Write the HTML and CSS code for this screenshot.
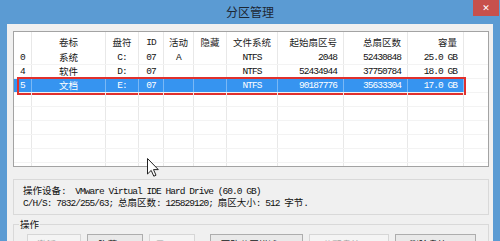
FILE: index.html
```html
<!DOCTYPE html>
<html lang="zh-CN">
<head>
    <meta charset="UTF-8">
    <title>分区管理</title>
    <link rel="stylesheet" href="styles.css">
</head>
<body>
    <div class="titlebar">
        <span></span>
        <span class="title">分区管理</span>
        <span class="close">&#x2715;</span>
    </div>
    <div class="window">
        <div class="listbox">
            <div class="lrow lhead">
                <div class="c"></div>
                <div class="c">卷标</div>
                <div class="c">盘符</div>
                <div class="c m">ID</div>
                <div class="c">活动</div>
                <div class="c">隐藏</div>
                <div class="c">文件系统</div>
                <div class="c r">起始扇区号</div>
                <div class="c r">总扇区数</div>
                <div class="c r">容量</div>
                <div class="c"></div>
            </div>
            <div class="lrow">
                <div class="c m l">0</div>
                <div class="c">系统</div>
                <div class="c m">C:</div>
                <div class="c m">07</div>
                <div class="c m">A</div>
                <div class="c"></div>
                <div class="c m">NTFS</div>
                <div class="c m r">2048</div>
                <div class="c m r">52430848</div>
                <div class="c m r">25.0 GB</div>
                <div class="c"></div>
            </div>
            <div class="lrow">
                <div class="c m l">4</div>
                <div class="c">软件</div>
                <div class="c m">D:</div>
                <div class="c m">07</div>
                <div class="c m"></div>
                <div class="c"></div>
                <div class="c m">NTFS</div>
                <div class="c m r">52434944</div>
                <div class="c m r">37750784</div>
                <div class="c m r">18.0 GB</div>
                <div class="c"></div>
            </div>
            <div class="lrow sel">
                <div class="c m l">5</div>
                <div class="c">文档</div>
                <div class="c m">E:</div>
                <div class="c m">07</div>
                <div class="c m"></div>
                <div class="c"></div>
                <div class="c m">NTFS</div>
                <div class="c m r">90187776</div>
                <div class="c m r">35633304</div>
                <div class="c m r">17.0 GB</div>
                <div class="c"></div>
            </div>
            <!-- empty rows -->
            <div class="lrow"><div class="c"></div><div class="c"></div><div class="c"></div><div class="c"></div><div class="c"></div><div class="c"></div><div class="c"></div><div class="c"></div><div class="c"></div><div class="c"></div><div class="c"></div></div>
            <div class="lrow"><div class="c"></div><div class="c"></div><div class="c"></div><div class="c"></div><div class="c"></div><div class="c"></div><div class="c"></div><div class="c"></div><div class="c"></div><div class="c"></div><div class="c"></div></div>
            <div class="lrow"><div class="c"></div><div class="c"></div><div class="c"></div><div class="c"></div><div class="c"></div><div class="c"></div><div class="c"></div><div class="c"></div><div class="c"></div><div class="c"></div><div class="c"></div></div>
            <div class="lrow"><div class="c"></div><div class="c"></div><div class="c"></div><div class="c"></div><div class="c"></div><div class="c"></div><div class="c"></div><div class="c"></div><div class="c"></div><div class="c"></div><div class="c"></div></div>
            <div class="lrow"><div class="c"></div><div class="c"></div><div class="c"></div><div class="c"></div><div class="c"></div><div class="c"></div><div class="c"></div><div class="c"></div><div class="c"></div><div class="c"></div><div class="c"></div></div>
            <div class="lrow"><div class="c"></div><div class="c"></div><div class="c"></div><div class="c"></div><div class="c"></div><div class="c"></div><div class="c"></div><div class="c"></div><div class="c"></div><div class="c"></div><div class="c"></div></div>
        </div>

        <div class="info">
            <div class="line">操作设备<span class="m">:  VMware Virtual IDE Hard Drive (60.0 GB)</span></div>
            <div class="line"><span class="m">C/H/S: 7832/255/63; </span>总扇区数<span class="m">: 125829120; </span>扇区大小<span class="m">: 512 </span>字节<span class="m">.</span></div>
        </div>

        <fieldset class="ops">
            <legend>操作</legend>
            <div class="btns">
                <button class="btn off" style="width:54px">激活<span class="m">(A)</span></button>
                <button class="btn" style="width:56px">隐藏<span class="m">(H)</span></button>
                <button class="btn off" style="width:46px">显示<span class="m">(S)</span></button>
                <button class="btn sep" style="width:93px">更改分区描述<span class="m">(D)</span></button>
                <button class="btn off" style="width:80px">分配盘符<span class="m">(L)</span></button>
                <button class="btn" style="width:81px">删除盘符<span class="m">(R)</span></button>
            </div>
        </fieldset>
    </div>

    <svg class="cursor" width="12" height="19" viewBox="0 0 12 19">
        <path d="M0.5 0.5 L0.5 16 L4.2 12.4 L6.8 18.2 L9 17.2 L6.5 11.6 L11.3 11.6 Z" fill="#fff" stroke="#222" stroke-width="1" stroke-linejoin="round"/>
    </svg>
</body>
</html>
```

FILE: styles.css
```css
body {
    margin: 0;
    width: 500px;
    height: 241px;
    overflow: hidden;
    background: #5b9bd3;
    font-family: "Noto Sans CJK SC", sans-serif;
    font-size: 9.5px;
    color: #111;
    position: relative;
}
.m {
    font-family: "Liberation Mono", "Noto Sans CJK SC", monospace;
    letter-spacing: -0.95px;
    white-space: pre;
}
.titlebar {
    display: grid;
    grid-template-columns: 1fr auto 1fr;
    height: 24px;
    align-items: start;
}
.title {
    font-size: 12px;
    line-height: 24px;
    color: #1d2733;
}
.close {
    justify-self: end;
    width: 26px;
    height: 16px;
    margin-right: 1px;
    background: #c7504c;
    color: #fff;
    font-family: "DejaVu Sans", sans-serif;
    font-size: 9px;
    font-weight: bold;
    line-height: 16px;
    text-align: center;
}
.window {
    margin: 0 7px;
    height: 217px;
    background: #f0f0f0;
    padding: 7px 4px 0 6px;
    box-sizing: border-box;
}
.listbox {
    height: 134px;
    border: 1px solid #a3a3a3;
    background: #fff;
    overflow: hidden;
}
.lrow {
    display: grid;
    grid-template-columns: 18px 74px 33px 25px 30px 33px 51px 66px 64px 56px 1fr;
    height: 14px;
    border-bottom: 1px solid #f3f3f3;
    box-sizing: border-box;
    position: relative;
}
.lhead {
    height: 19px;
    border-bottom: none;
    color: #222;
}
.c {
    border-right: 1px solid #e8e8e8;
    box-sizing: border-box;
    text-align: center;
    line-height: 13px;
    white-space: nowrap;
    overflow: hidden;
}
.lhead .c {
    padding-top: 4px;
}
.c.l {
    text-align: left;
    padding-left: 6px;
}
.c.r {
    text-align: right;
    padding-right: 6px;
}
.c:last-child {
    border-right: none;
}
.sel .c:not(:last-child) {
    background: #3694f0;
    color: #fff;
    border-right-color: #7ab8f5;
}
.sel::after {
    content: "";
    position: absolute;
    left: 3px;
    top: -2px;
    width: 449px;
    height: 18px;
    border: 2px solid #e0302d;
    box-sizing: border-box;
}
.info {
    margin-top: 12px;
    height: 36px;
    border: 1px solid #d9d9d9;
    box-sizing: border-box;
    padding: 5px 0 0 9px;
}
.line {
    line-height: 10px;
    white-space: pre;
}
.ops {
    margin: 4px 0 0 0;
    padding: 0;
    border: 1px solid #d9d9d9;
    height: 40px;
}
.ops legend {
    margin-left: 5px;
    padding: 0 1px;
    line-height: 10px;
    font-size: 9.5px;
}
.btns {
    display: flex;
    gap: 6px;
    margin-top: 5px;
    padding-left: 13px;
}
.btn {
    height: 20px;
    padding: 0;
    border: 1px solid #adadad;
    background: #e9e9e9;
    font-family: "Noto Sans CJK SC", sans-serif;
    font-size: 9.5px;
    color: #111;
    line-height: 18px;
    white-space: nowrap;
}
.btn.off {
    border-color: #d6d6d6;
    background: #f4f4f4;
    color: #a2a2a2;
}
.btn.sep {
    margin-left: 9px;
}
.cursor {
    position: absolute;
    left: 147px;
    top: 158px;
}
```
